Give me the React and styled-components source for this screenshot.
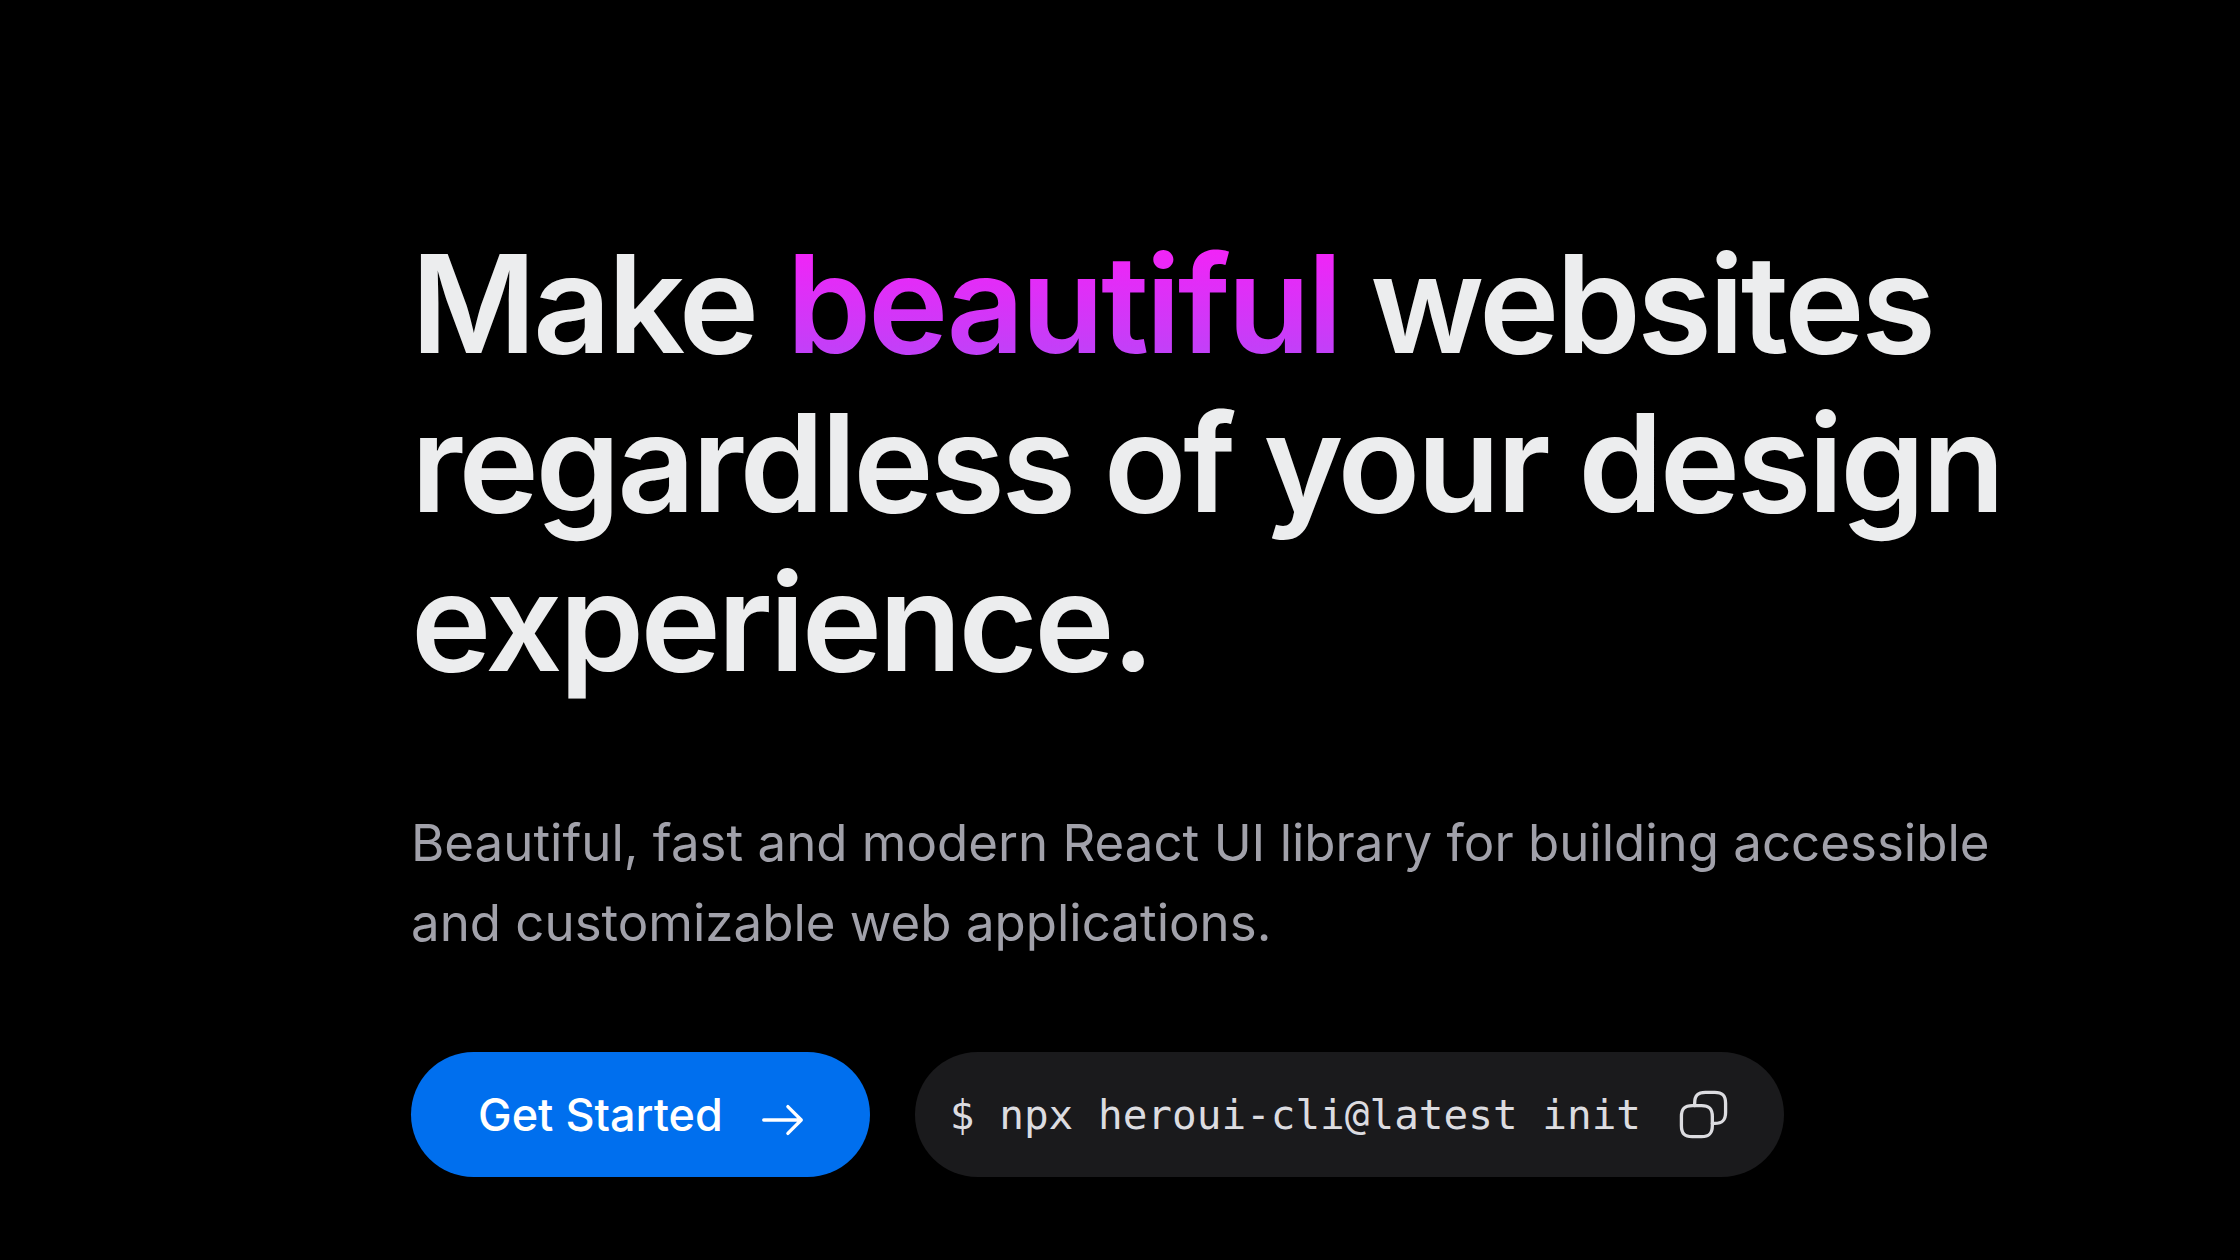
import React, { useState } from 'react';
import styled, { createGlobalStyle } from 'styled-components';

const GlobalStyle = createGlobalStyle`
  * {
    box-sizing: border-box;
  }

  body {
    margin: 0;
    background-color: #000000;
    font-family: Inter, "Liberation Sans", sans-serif;
  }
`;

const Hero = styled.main`
  display: flex;
  flex-direction: column;
  min-height: 100vh;
  padding: 224px 180px 80px 411px;
`;

const Title = styled.h1`
  margin: 0 0 102px;
  color: #ecedee;
  font-size: 136px;
  font-weight: 600;
  line-height: 159px;
  letter-spacing: -0.025em;
`;

const Highlight = styled.span`
  background: linear-gradient(180deg, #ff1cf7, #b249f8);
  background-clip: text;
  -webkit-background-clip: text;
  color: transparent;
`;

const Subtitle = styled.p`
  margin: 0 0 89px;
  color: #a1a1aa;
  font-size: 51px;
  font-weight: 400;
  line-height: 80px;
`;

const Actions = styled.div`
  display: flex;
  align-items: center;
  flex-wrap: wrap;
  gap: 45px;
`;

const StartLink = styled.a`
  display: flex;
  align-items: center;
  gap: 33px;
  height: 125px;
  padding: 0 61px 0 67px;
  border-radius: 1000px;
  background-color: #006fee;
  color: #ffffff;
  font-size: 45px;
  font-weight: 500;
  line-height: 64px;
  text-decoration: none;
`;

const Snippet = styled.div`
  display: flex;
  align-items: center;
  gap: 36px;
  height: 125px;
  padding: 0 54px 0 35px;
  border-radius: 1000px;
  background-color: #1a1a1c;
  color: #dcdce0;
`;

const Command = styled.code`
  font-family: "DejaVu Sans Mono", monospace;
  font-size: 41px;
  line-height: 56px;
  white-space: pre;
`;

const CopyButton = styled.button`
  display: flex;
  padding: 0;
  border: none;
  background: none;
  color: ${({ $copied }) => ($copied ? '#17c964' : 'inherit')};
  cursor: pointer;
`;

const Icon = styled.svg`
  width: 53px;
  height: 53px;
  flex-shrink: 0;
  fill: none;
  stroke: currentColor;
  stroke-width: 1.5;
  stroke-linecap: round;
  stroke-linejoin: round;
`;

const ArrowIcon = () => (
  <Icon viewBox="0 0 24 24" aria-hidden="true">
    <path d="M14.43 8.43 20.5 14.5l-6.07 6.07M3.5 14.5h16.83" />
  </Icon>
);

const CopyIcon = () => (
  <Icon viewBox="0 0 24 24" aria-hidden="true">
    <path d="M16 17.1c0 3.5-1.4 4.9-4.9 4.9H6.9C3.4 22 2 20.6 2 17.1v-4.2C2 9.4 3.4 8 6.9 8h4.2c3.5 0 4.9 1.4 4.9 4.9Z" />
    <path d="M8 8V6.9C8 3.4 9.4 2 12.9 2h4.2C20.6 2 22 3.4 22 6.9v4.2c0 3.5-1.4 4.9-4.9 4.9H16" />
  </Icon>
);

const command = 'npx heroui-cli@latest init';

const App = () => {
  const [copied, setCopied] = useState(false);

  const handleCopy = () => {
    navigator.clipboard?.writeText(command);
    setCopied(true);
  };

  return (
    <>
      <GlobalStyle />
      <Hero>
        <Title>
          Make <Highlight>beautiful</Highlight> websites regardless of your design experience.
        </Title>
        <Subtitle>
          Beautiful, fast and modern React UI library for building accessible and customizable web applications.
        </Subtitle>
        <Actions>
          <StartLink href="#get-started">
            Get Started
            <ArrowIcon />
          </StartLink>
          <Snippet>
            <Command>$ {command}</Command>
            <CopyButton type="button" aria-label="Copy command" $copied={copied} onClick={handleCopy}>
              <CopyIcon />
            </CopyButton>
          </Snippet>
        </Actions>
      </Hero>
    </>
  );
};

export default App;
